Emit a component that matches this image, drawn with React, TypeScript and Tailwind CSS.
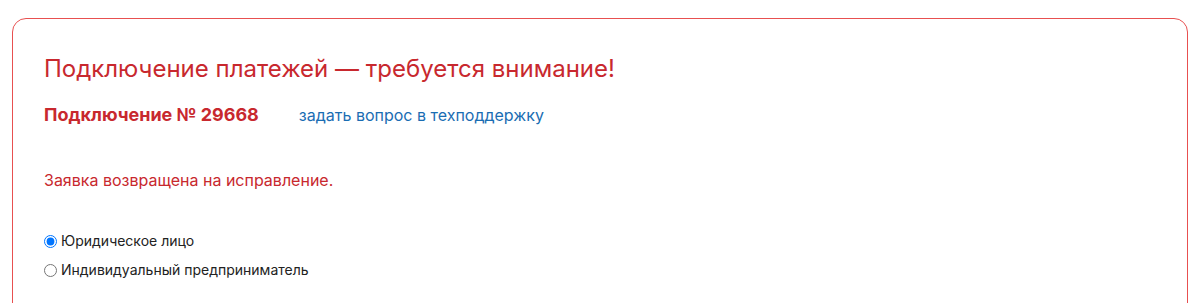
export default function App() {
  return (
    <div className="bg-white w-[1200px] h-[303px] pt-[18px] px-[12px] font-['Inter',sans-serif] overflow-hidden">
      <div className="border border-[#e85050] rounded-[14px] h-[320px] px-[31px] pt-[34px]">
        <h1 className="text-[24px] leading-[32px] text-[#c8282e] font-normal">
          Подключение платежей — требуется внимание!
        </h1>
        <div className="flex items-baseline mt-[18px] leading-[24px]">
          <span className="text-[18px] font-bold text-[#c8282e]">Подключение № 29668</span>
          <a href="#" className="ml-[40px] text-[16px] text-[#1a6db3]">
            задать вопрос в техподдержку
          </a>
        </div>
        <p className="mt-[41px] text-[16px] leading-[24px] text-[#c8282e]">
          Заявка возвращена на исправление.
        </p>
        <div className="mt-[38px] flex flex-col gap-[7px] text-[14px] leading-[22px] text-[#222]">
          <label className="flex items-center gap-[4px]">
            <input type="radio" name="type" defaultChecked className="m-0 w-[13px] h-[13px]" />
            Юридическое лицо
          </label>
          <label className="flex items-center gap-[4px]">
            <input type="radio" name="type" className="m-0 w-[13px] h-[13px]" />
            Индивидуальный предприниматель
          </label>
        </div>
      </div>
    </div>
  );
}
